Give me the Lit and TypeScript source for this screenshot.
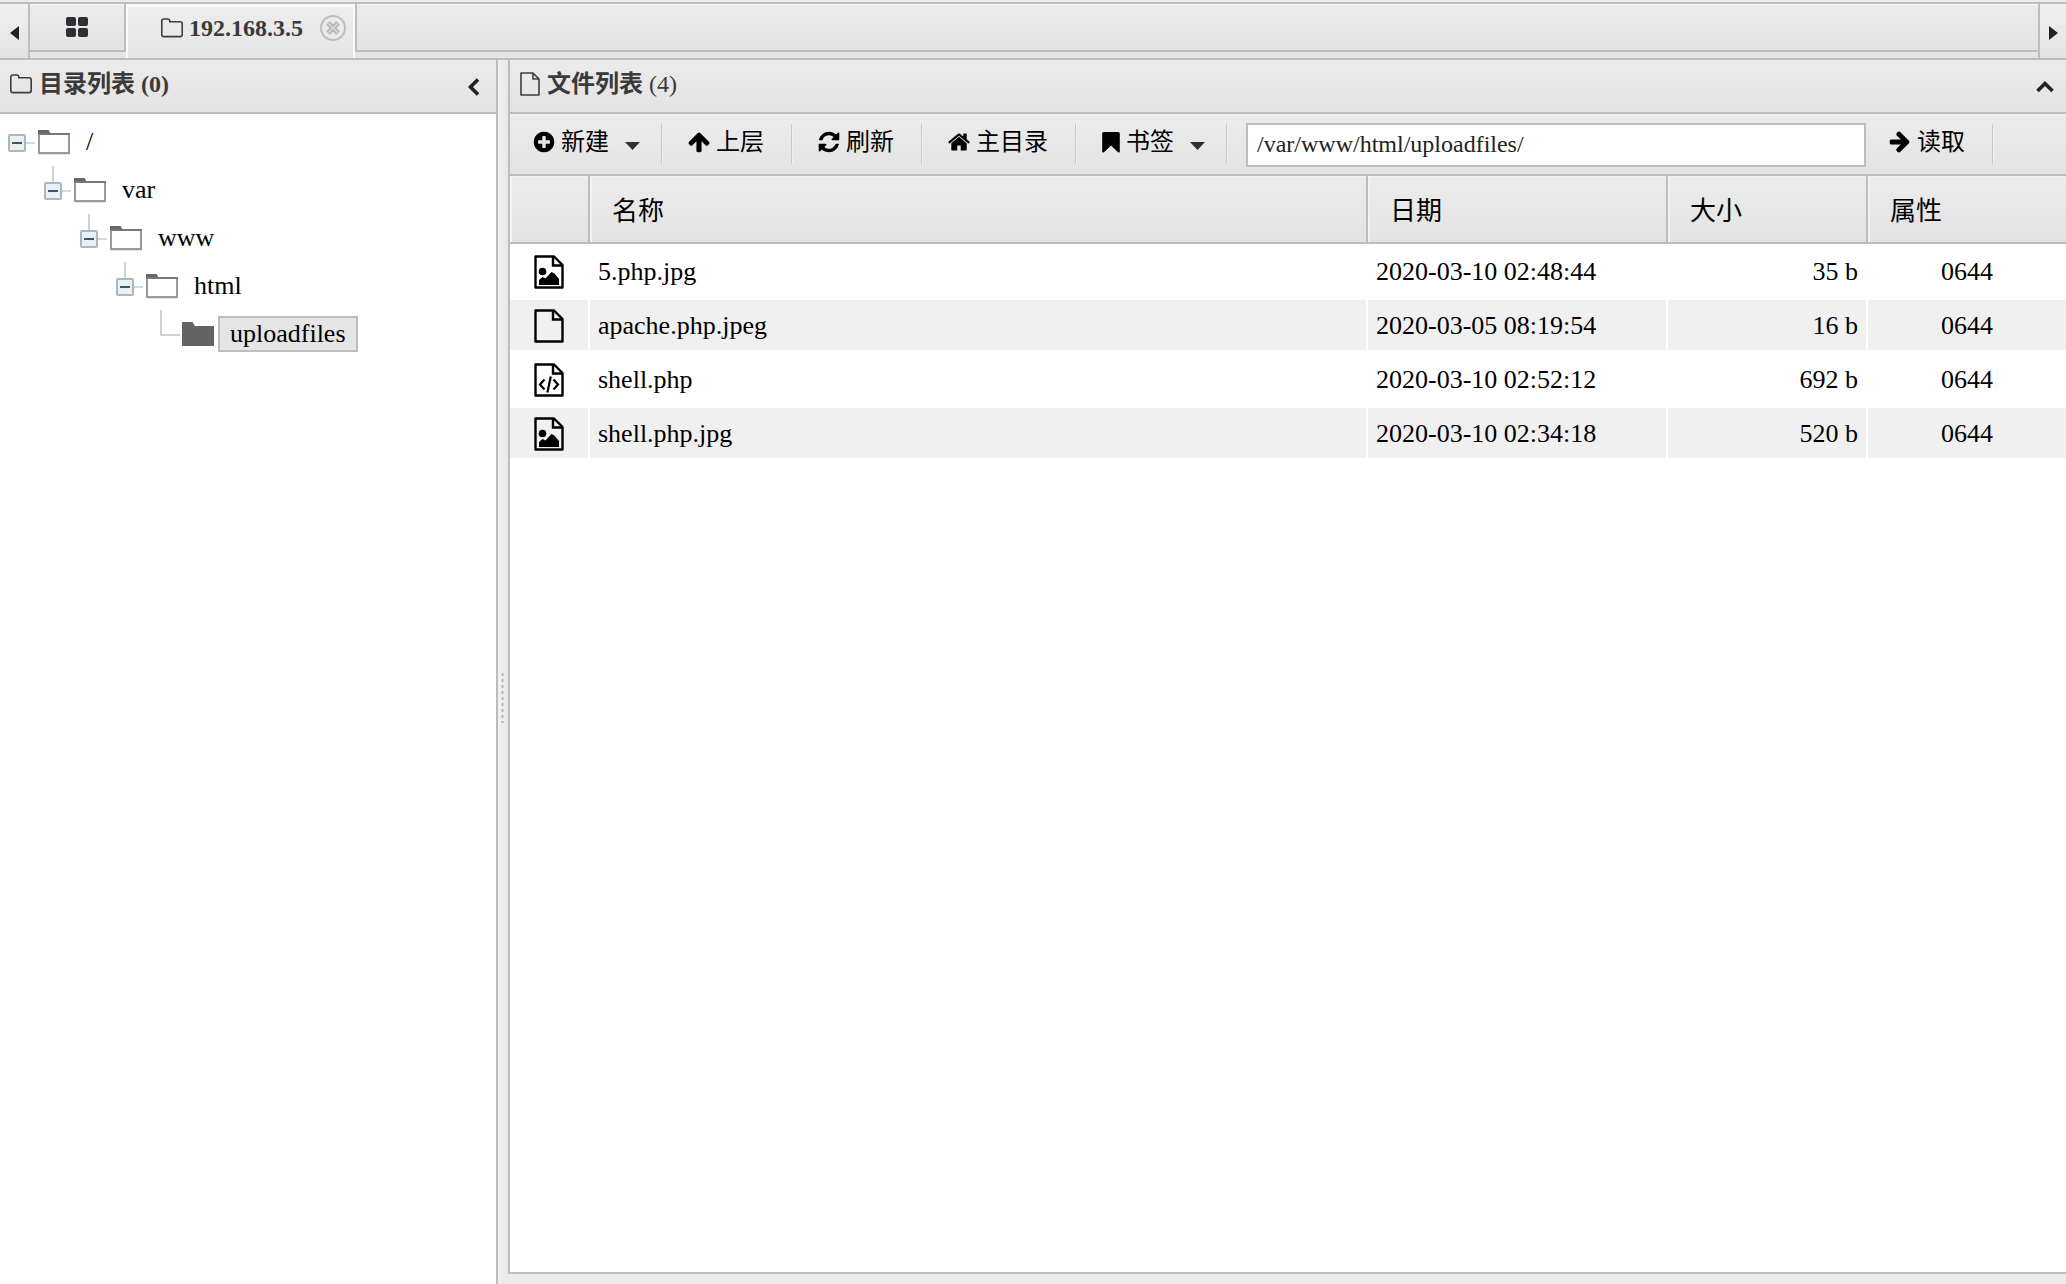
import { LitElement, html, css, svg, nothing } from "lit";
import { customElement, property, state } from "lit/decorators.js";

interface TreeNode {
  name: string;
  children?: TreeNode[];
}

type FileKind = "image" | "plain" | "code";

interface FileEntry {
  kind: FileKind;
  name: string;
  date: string;
  size: string;
  mode: string;
}

const TREE: TreeNode = {
  name: "/",
  children: [
    {
      name: "var",
      children: [
        { name: "www", children: [{ name: "html", children: [{ name: "uploadfiles" }] }] },
      ],
    },
  ],
};

const FILES: FileEntry[] = [
  { kind: "image", name: "5.php.jpg", date: "2020-03-10 02:48:44", size: "35 b", mode: "0644" },
  { kind: "plain", name: "apache.php.jpeg", date: "2020-03-05 08:19:54", size: "16 b", mode: "0644" },
  { kind: "code", name: "shell.php", date: "2020-03-10 02:52:12", size: "692 b", mode: "0644" },
  { kind: "image", name: "shell.php.jpg", date: "2020-03-10 02:34:18", size: "520 b", mode: "0644" },
];

const ARROW_UP =
  "M1675 971q0 51-37 90l-75 75q-38 38-91 38-54 0-90-38l-294-293v704q0 52-37.5 84.5t-90.5 32.5h-128q-53 0-90.5-32.5t-37.5-84.5v-704l-294 293q-36 38-90 38t-90-38l-75-75q-38-38-38-90 0-53 38-91l651-651q35-37 90-37 54 0 91 37l651 651q37 39 37 91z";

const glyph = (d: string, rotate = 0) => html`<svg width="24" height="24" viewBox="0 0 1792 1792" fill="#000" aria-hidden="true">
  <path d=${d} transform="rotate(${rotate} 896 896)"></path>
</svg>`;

const icons = {
  add: glyph(
    "M1344 960v-128q0-26-19-45t-45-19h-256v-256q0-26-19-45t-45-19h-128q-26 0-45 19t-19 45v256h-256q-26 0-45 19t-19 45v128q0 26 19 45t45 19h256v256q0 26 19 45t45 19h128q26 0 45-19t19-45v-256h256q26 0 45-19t19-45zm320-64q0 209-103 385.5t-279.5 279.5-385.5 103-385.5-103-279.5-279.5-103-385.5 103-385.5 279.5-279.5 385.5-103 385.5 103 279.5 279.5 103 385.5z"
  ),
  up: glyph(ARROW_UP),
  go: glyph(ARROW_UP, 90),
  refresh: glyph(
    "M1639 1056q0 5-1 7-64 268-268 434.5t-478 166.5q-146 0-282.5-55t-243.5-157l-129 129q-19 19-45 19t-45-19-19-45v-448q0-26 19-45t45-19h448q26 0 45 19t19 45-19 45l-137 137q71 66 161 102t187 36q134 0 250-65t186-179q11-17 53-117 8-23 30-23h192q13 0 22.5 9.5t9.5 22.5zm25-800v448q0 26-19 45t-45 19h-448q-26 0-45-19t-19-45 19-45l138-138q-148-137-349-137-134 0-250 65t-186 179q-11 17-53 117-8 23-30 23h-199q-13 0-22.5-9.5t-9.5-22.5v-7q65-268 270-434.5t480-166.5q146 0 284 55.5t245 156.5l130-129q19-19 45-19t45 19 19 45z"
  ),
  home: glyph(
    "M1472 992v480q0 26-19 45t-45 19h-384v-384h-256v384h-384q-26 0-45-19t-19-45v-480q0-1 .5-3t.5-3l575-474 575 474q1 2 1 6zm223-69l-62 74q-8 9-21 11h-3q-13 0-21-7l-692-577-692 577q-12 8-24 7-13-2-21-11l-62-74q-8-10-7-23.5t11-21.5l719-599q32-26 76-26t76 26l244 204v-195q0-14 9-23t23-9h192q14 0 23 9t9 23v408l219 182q10 8 11 21.5t-7 23.5z"
  ),
  bookmark: html`<svg width="20" height="24" viewBox="0 0 20 24" aria-hidden="true">
    <path d="M2.800 2h14.400q1.600 0 1.600 1.600v17.800q0 1.600-1.800.9L10 15.600l-7 6.700q-1.800.7-1.800-.9V3.600Q1.200 2 2.800 2z" fill="#000"></path>
  </svg>`,
  caret: html`<svg class="caret" width="15" height="8" viewBox="0 0 15 8" aria-hidden="true">
    <path d="M0 0h15L7.500 8z" fill="#2f2f2f"></path>
  </svg>`,
  grid: html`<svg width="24" height="22" viewBox="0 0 24 22" fill="#2d2f33" aria-hidden="true">
    <rect x="1" y="1" width="10" height="9" rx="2"></rect><rect x="13" y="1" width="10" height="9" rx="2"></rect>
    <rect x="1" y="12" width="10" height="9" rx="2"></rect><rect x="13" y="12" width="10" height="9" rx="2"></rect>
  </svg>`,
  folderOutline: html`<svg width="24" height="22" viewBox="0 0 24 22" aria-hidden="true">
    <path d="M1.800 4.200q0-2.200 2.200-2.200h3.600q2.200 0 2.200 2.200v.6h10.200q2.200 0 2.200 2.200v10.400q0 2.200-2.200 2.200h-16q-2.200 0-2.200-2.200z" fill="none" stroke="#3c3c3c" stroke-width="1.600"></path>
  </svg>`,
  fileOutline: html`<svg width="22" height="26" viewBox="0 0 22 26" aria-hidden="true">
    <path d="M2 2h12l6 6v16H2zM14 2v6h6" fill="none" stroke="#3c3c3c" stroke-width="1.600" stroke-linejoin="round"></path>
  </svg>`,
  close: html`<svg width="26" height="26" viewBox="0 0 26 26" aria-hidden="true">
    <circle cx="13" cy="13" r="12" fill="none" stroke="#bdbdbd" stroke-width="2"></circle>
    <path d="M8 8l10 10M18 8L8 18" stroke="#b4b4b4" stroke-width="5"></path>
    <path d="M8.500 8.500l9 9M17.500 8.500l-9 9" stroke="#d8d8d8" stroke-width="1.600"></path>
  </svg>`,
};

const fileMarks: Record<FileKind, unknown> = {
  plain: nothing,
  image: svg`<circle cx="8.500" cy="16.500" r="3.800" fill="#000"></circle>
    <path d="M5 30v-5l3.500-3 3 1.500 6-6.500 3 1.500 4.500 5.500V30z" fill="#000"></path>`,
  code: svg`<path d="M10.500 16.500l-4.500 5 4.500 5M19.500 16.500l4.500 5-4.500 5M16.800 13.500l-3.400 16" fill="none" stroke="#000" stroke-width="2.200"></path>`,
};

const fileIcon = (kind: FileKind) => html`<svg class="file-icon" width="30" height="34" viewBox="0 0 30 34" aria-hidden="true">
  <path d="M1.500 1.500h18.500l8.500 8.500v22.500h-27z" fill="none" stroke="#000" stroke-width="2.400" stroke-linejoin="round"></path>
  <path d="M19 1.500v9h9.500" fill="none" stroke="#000" stroke-width="2.400"></path>
  ${fileMarks[kind]}
</svg>`;

/* Folder tree: each level indents by one guide width. */
@customElement("folder-tree")
export class FolderTree extends LitElement {
  @property({ attribute: false }) root: TreeNode = TREE;
  @state() private selected = "uploadfiles";

  static styles = css`
    :host {
      display: block;
      padding-top: 4px;
      font: 26px/32px "Liberation Serif", "Noto Sans CJK SC", serif;
      color: #000;
    }
    ul {
      list-style: none;
      margin: 0;
      padding: 0;
    }
    ul ul {
      padding-left: 36px;
    }
    .row {
      display: flex;
      align-items: center;
      height: 48px;
    }
    button {
      font: inherit;
      color: inherit;
      background: none;
      border: 0;
      padding: 0;
      margin: 0;
    }
    svg {
      display: block;
      flex: none;
    }
    .toggle,
    .guide {
      width: 38px;
      height: 48px;
    }
    .label {
      height: 36px;
      margin-left: 4px;
      padding: 0 10px;
      border: 2px solid transparent;
    }
    .label.selected {
      background: #e5e5e5;
      border-color: #bdbdbd;
    }
  `;

  private guide(level: number, leaf: boolean) {
    return html`<svg width="38" height="48" viewBox="0 0 38 48" aria-hidden="true">
      ${leaf
        ? svg`<path d="M17 0v25h19" fill="none" stroke="#bfc5c8" stroke-width="1.500"></path>`
        : svg`
          ${level > 0 ? svg`<path d="M17 0v16" stroke="#bfc5c8" stroke-width="1.500"></path>` : nothing}
          <path d="M26 25h9" stroke="#c3ccd2" stroke-width="1.500"></path>
          <rect x="9" y="17" width="16" height="16" rx="1" fill="#eaf1f4" stroke="#a9b7bf" stroke-width="2"></rect>
          <path d="M12 25h10" stroke="#3d5568" stroke-width="2"></path>`}
    </svg>`;
  }

  private folder(closed: boolean) {
    return html`<svg width="32" height="28" viewBox="0 0 32 28" aria-hidden="true">
      ${closed
        ? svg`<path d="M0 2h10.500l2.500 4H32v20H0z" fill="#636363"></path>`
        : svg`<rect x="1" y="25" width="31" height="2" fill="#e2e2e2"></rect>
          <path d="M0 2h10.500l2 3.500H31V8H0z" fill="#666"></path>
          <path d="M1 7v18h30V7" fill="#fff" stroke="#9b9b9b" stroke-width="2"></path>
          <path d="M0 6h32" stroke="#777" stroke-width="2"></path>`}
    </svg>`;
  }

  private node(item: TreeNode, level: number): unknown {
    const leaf = !item.children;
    return html`<li>
      <div class="row">
        ${leaf
          ? html`<span class="guide">${this.guide(level, true)}</span>`
          : html`<button class="toggle" aria-label=${item.name} aria-expanded="true">${this.guide(level, false)}</button>`}
        ${this.folder(leaf)}
        <button
          class="label ${this.selected === item.name ? "selected" : ""}"
          @click=${() => (this.selected = item.name)}
        >${item.name}</button>
      </div>
      ${leaf ? nothing : html`<ul>${item.children!.map((child) => this.node(child, level + 1))}</ul>`}
    </li>`;
  }

  render() {
    return html`<ul>${this.node(this.root, 0)}</ul>`;
  }
}

@customElement("file-table")
export class FileTable extends LitElement {
  @property({ attribute: false }) files: FileEntry[] = FILES;

  static styles = css`
    :host {
      display: block;
      font: 26px/32px "Liberation Serif", "Noto Sans CJK SC", serif;
      color: #000;
    }
    table {
      width: 100%;
      table-layout: fixed;
      border-collapse: separate;
      border-spacing: 0;
    }
    .col-icon {
      width: 80px;
    }
    .col-date {
      width: 300px;
    }
    .col-size {
      width: 200px;
    }
    .col-mode {
      width: 198px;
    }
    th {
      box-sizing: border-box;
      height: 68px;
      padding: 6px 22px 0;
      font-weight: 400;
      text-align: left;
      background: linear-gradient(#ececec, #e3e3e3);
      border-right: 2px solid #bdbdbd;
      border-bottom: 2px solid #bdbdbd;
      box-shadow: inset 2px 1px #f3f3f3;
    }
    th:last-child,
    td:last-child {
      border-right: 0;
    }
    td {
      box-sizing: border-box;
      height: 54px;
      padding: 2px 8px 0;
      border: 2px solid #fff;
      border-left: 0;
    }
    tbody tr:nth-child(even) td {
      background: #f0f0f0;
    }
    .icon {
      padding-left: 24px;
    }
    .size {
      text-align: right;
    }
    .mode {
      text-align: center;
    }
    .file-icon {
      display: block;
    }
  `;

  render() {
    return html`<table>
      <colgroup>
        <col class="col-icon" /><col /><col class="col-date" /><col class="col-size" /><col class="col-mode" />
      </colgroup>
      <thead>
        <tr><th></th><th>名称</th><th>日期</th><th>大小</th><th>属性</th></tr>
      </thead>
      <tbody>
        ${this.files.map(
          (file) => html`<tr>
            <td class="icon">${fileIcon(file.kind)}</td>
            <td>${file.name}</td>
            <td>${file.date}</td>
            <td class="size">${file.size}</td>
            <td class="mode">${file.mode}</td>
          </tr>`
        )}
      </tbody>
    </table>`;
  }
}

@customElement("app-root")
export class AppRoot extends LitElement {
  static styles = css`
    :host {
      display: flex;
      flex-direction: column;
      height: 100vh;
      overflow: hidden;
      background: #ebebeb;
      color: #3a3a3a;
      font: 24px/32px "Liberation Serif", "Noto Sans CJK SC", serif;
    }
    button,
    input {
      font: inherit;
      color: inherit;
      background: none;
      border: 0;
      padding: 0;
      margin: 0;
      border-radius: 0;
    }
    svg {
      display: block;
      flex: none;
    }

    /* Tab strip */
    .tabbar {
      display: flex;
      flex: none;
      height: 54px;
      margin-top: 2px;
      border-top: 2px solid #bdbdbd;
      border-bottom: 2px solid #bdbdbd;
      background: #e5e5e5;
    }
    .scroll {
      display: flex;
      align-items: center;
      justify-content: center;
      width: 30px;
      padding-top: 4px;
      background: linear-gradient(#f0f0f0, #e3e3e3);
      border-right: 2px solid #bdbdbd;
    }
    .scroll.right {
      width: 28px;
      border-right: 0;
      border-left: 2px solid #bdbdbd;
    }
    .tab,
    .rest {
      display: flex;
      align-items: center;
      box-sizing: border-box;
      height: 48px;
      background: linear-gradient(#ececec, #e3e3e3);
      border-bottom: 2px solid #bdbdbd;
      box-shadow: inset 0 1px #f8f8f8;
    }
    .tab {
      justify-content: center;
      width: 96px;
      border-right: 2px solid #bdbdbd;
    }
    .tab.active {
      justify-content: flex-start;
      width: auto;
      height: 54px;
      padding: 0 7px 8px 32px;
      background: linear-gradient(#ededed, #e5e5e5);
      border: 2px solid #fafafa;
      border-bottom: 0;
      font-weight: 700;
    }
    .tab-title {
      margin: 0 17px 0 5px;
    }
    .rest {
      flex: 1;
      border-left: 2px solid #bdbdbd;
    }

    /* Panels */
    .body {
      display: flex;
      flex: 1;
      min-height: 0;
    }
    .panel {
      display: flex;
      flex-direction: column;
      background: #fff;
    }
    .side {
      flex: none;
      width: 496px;
      border-right: 2px solid #bdbdbd;
    }
    .main {
      flex: 1;
      min-width: 0;
      margin-bottom: 10px;
      border-left: 2px solid #bdbdbd;
      border-bottom: 2px solid #bdbdbd;
    }
    .panel-head {
      display: flex;
      align-items: center;
      flex: none;
      box-sizing: border-box;
      height: 54px;
      padding: 0 12px 4px 9px;
      background: linear-gradient(#ebebeb, #e3e3e3);
      border-bottom: 2px solid #bdbdbd;
    }
    h2 {
      flex: 1;
      margin: 0 0 0 6px;
      font-size: 24px;
      font-weight: 700;
    }
    .count {
      font-weight: 400;
    }
    .collapse {
      padding-top: 6px;
    }
    .splitter {
      display: flex;
      align-items: center;
      justify-content: center;
      flex: none;
      width: 10px;
      box-sizing: border-box;
      padding: 52px 1px 0 0;
      background: linear-gradient(90deg, #f2f2f2, #e8e8e8);
    }

    /* Toolbar */
    .toolbar {
      display: flex;
      align-items: center;
      flex: none;
      box-sizing: border-box;
      height: 62px;
      background: linear-gradient(#ececec, #e3e3e3);
      border-bottom: 2px solid #bdbdbd;
      box-shadow: inset 0 2px #efefef;
      color: #000;
    }
    .tool {
      display: flex;
      align-items: center;
      gap: 5px;
      height: 40px;
      padding: 0 27px 4px 22px;
      white-space: nowrap;
    }
    .tool.menu {
      padding-right: 21px;
    }
    .caret {
      margin: 8px 0 0 11px;
    }
    .sep {
      width: 1px;
      height: 40px;
      margin-right: 2px;
      background: #c9c9c9;
      border-right: 1px solid #efefef;
    }
    .path {
      flex: 0 1 620px;
      min-width: 0;
      box-sizing: border-box;
      height: 44px;
      margin: 2px 0 0 16px;
      padding: 0 9px 2px;
      background: #fff;
      border: 2px solid #bdbdbd;
      color: #222;
    }
  `;

  render() {
    const sep = html`<span class="sep"></span>`;
    return html`
      <nav class="tabbar">
        <button class="scroll" aria-label="◂">
          <svg width="9" height="14" viewBox="0 0 9 14"><path d="M9 0v14L0 7z" fill="#222"></path></svg>
        </button>
        <button class="tab" aria-label="▦">${icons.grid}</button>
        <div class="tab active">
          ${icons.folderOutline}<span class="tab-title">192.168.3.5</span>
          <button aria-label="×">${icons.close}</button>
        </div>
        <div class="rest"></div>
        <button class="scroll right" aria-label="▸">
          <svg width="9" height="14" viewBox="0 0 9 14"><path d="M0 0v14L9 7z" fill="#222"></path></svg>
        </button>
      </nav>
      <div class="body">
        <aside class="panel side">
          <header class="panel-head">
            ${icons.folderOutline}
            <h2>目录列表 (0)</h2>
            <button class="collapse" aria-label="‹">
              <svg width="18" height="20" viewBox="0 0 18 20"><path d="M12 2.500L4.500 10l7.500 7.500" fill="none" stroke="#222" stroke-width="3.600"></path></svg>
            </button>
          </header>
          <folder-tree></folder-tree>
        </aside>
        <div class="splitter" role="separator">
          <svg width="3" height="50" viewBox="0 0 3 50"><path d="M1.500 0v50" stroke="#b5b5b5" stroke-width="2" stroke-dasharray="3 3"></path></svg>
        </div>
        <main class="panel main">
          <header class="panel-head">
            ${icons.fileOutline}
            <h2>文件列表 <span class="count">(4)</span></h2>
            <button class="collapse" aria-label="⌃">
              <svg width="18" height="14" viewBox="0 0 18 14"><path d="M1.500 11L9 3.500 16.500 11" fill="none" stroke="#222" stroke-width="3.600"></path></svg>
            </button>
          </header>
          <div class="toolbar">
            <button class="tool menu">${icons.add}<span>新建</span>${icons.caret}</button>${sep}
            <button class="tool">${icons.up}<span>上层</span></button>${sep}
            <button class="tool">${icons.refresh}<span>刷新</span></button>${sep}
            <button class="tool">${icons.home}<span>主目录</span></button>${sep}
            <button class="tool menu">${icons.bookmark}<span>书签</span>${icons.caret}</button>${sep}
            <input class="path" type="text" aria-labelledby="read" .value=${"/var/www/html/uploadfiles/"} />
            <button class="tool" id="read">${icons.go}<span>读取</span></button>${sep}
          </div>
          <file-table></file-table>
        </main>
      </div>
    `;
  }
}
